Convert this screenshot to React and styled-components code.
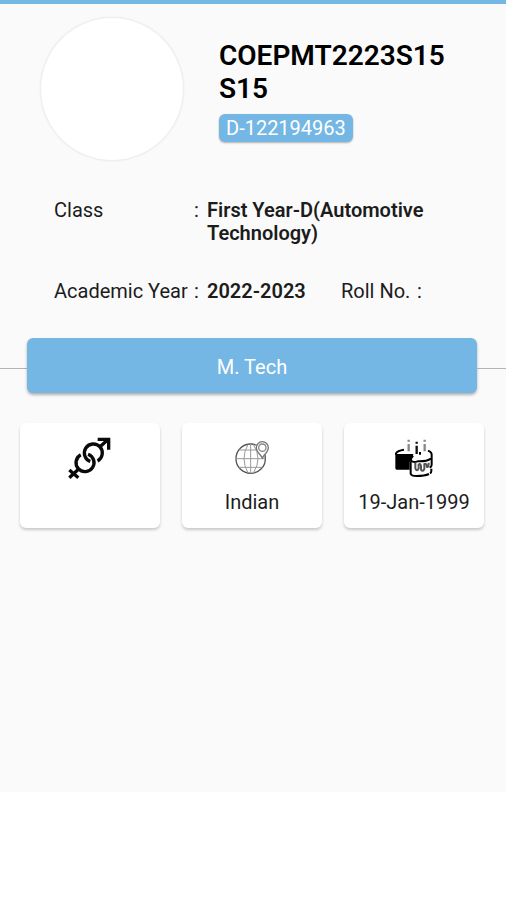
import React from "react";
import styled, { createGlobalStyle } from "styled-components";

const STUDENT = {
  name: "COEPMT2223S15 S15",
  id: "D-122194963",
  className: "First Year-D(Automotive Technology)",
  academicYear: "2022-2023",
  rollNo: "",
  course: "M. Tech",
  gender: "",
  nationality: "Indian",
  birthday: "19-Jan-1999",
};

function GenderIcon() {
  return (
    <StIcon viewBox="0 0 180 168" aria-label="Gender">
      <g fill="none" stroke="#0a0a0a" strokeWidth="10">
        <path d="M84.2 72.6A27 27 0 1 1 62.3 74.2" />
        <path d="M90.8 94.4A27 27 0 1 1 112.7 92.8" />
        <path d="M120 50L145 28" />
        <path d="M113 28H146V59" />
        <path d="M56 117L28 143M28 120L55 143" />
      </g>
    </StIcon>
  );
}

function GlobeIcon() {
  return (
    <StIcon viewBox="-8 0 180 168" aria-label="Nationality">
      <g fill="none" stroke="#555" strokeWidth="4">
        <circle cx="78" cy="86" r="44" />
        <g stroke="#999" strokeWidth="3">
          <path d="M78 42V130M34 86H122M43 60H110M43 112H113" />
          <path d="M70 43Q46 86 70 129M86 43Q114 86 86 129" />
        </g>
        <path
          d="M113 84C108 74 95 66 95 53A18 18 0 0 1 131 53C131 66 118 74 113 84Z"
          fill="#fff"
          stroke="#777"
        />
        <circle cx="113" cy="53" r="11" stroke="#888" />
      </g>
    </StIcon>
  );
}

function CakeIcon() {
  return (
    <StIcon viewBox="0 0 180 168" aria-label="Date of birth">
      <path d="M34 72H88L84 88L77 96V119H38Q34 119 34 115Z" fill="#000" />
      <g fill="none" stroke="#000" strokeWidth="6">
        <path d="M36 74V70Q40 62 60 59" />
        <path d="M80 94V131Q82 138 98 138Q122 138 135 132" />
        <path d="M142 116V123Q142 128 138 130" />
        <path d="M132 62Q144 66 143 76V104Q143 110 137 113" />
        <path d="M88 78Q78 84 82 93Q88 98 101 94Q128 95 141 86" />
        <path d="M108 66V74" />
        <path
          d="M94 98V115Q99 127 104 115V104Q109 98 111 108V119Q116 127 121 117V102Q127 98 129 111Q134 112 134 98"
          stroke="#555"
        />
      </g>
      <g strokeWidth="7">
        <path d="M74 42V64M122 42V64" stroke="#888" />
        <path d="M74 29V35M122 29V35" stroke="#888" />
        <path d="M98 47V72M98 35V41" stroke="#111" />
      </g>
    </StIcon>
  );
}

export default function App() {
  const cards = [
    { key: "gender", icon: <GenderIcon />, text: STUDENT.gender },
    { key: "nationality", icon: <GlobeIcon />, text: STUDENT.nationality },
    { key: "birthday", icon: <CakeIcon />, text: STUDENT.birthday },
  ];

  return (
    <>
      <GlobalStyle />
      <StPage>
        <StHeader>
          <StAvatar />
          <StIdentity>
            <StName>{STUDENT.name}</StName>
            <StBadge>{STUDENT.id}</StBadge>
          </StIdentity>
        </StHeader>

        <StInfo>
          <StRow>
            <StLabel>Class</StLabel>
            <StColon>:</StColon>
            <StValue>{STUDENT.className}</StValue>
          </StRow>
          <StRow>
            <StLabel>Academic Year</StLabel>
            <StColon>:</StColon>
            <StValue $short>{STUDENT.academicYear}</StValue>
            <StLabel $short>Roll No.</StLabel>
            <StColon>:</StColon>
            <StValue>{STUDENT.rollNo}</StValue>
          </StRow>
        </StInfo>

        <StCourse>
          <StCourseButton type="button">{STUDENT.course}</StCourseButton>
        </StCourse>

        <StCards>
          {cards.map((card) => (
            <StCard key={card.key}>
              {card.icon}
              <span>{card.text}</span>
            </StCard>
          ))}
        </StCards>
      </StPage>
    </>
  );
}

const GlobalStyle = createGlobalStyle`
  * {
    box-sizing: border-box;
  }

  body {
    margin: 0;
    background: #fff;
    color: #1c1c1c;
    font-family: Roboto, "Liberation Sans", sans-serif;
    font-size: 20px;
    line-height: 23px;
  }
`;

const StPage = styled.main`
  min-height: 88vh;
  background: #fafafa;
  border-top: 4px solid #74b7e5;
`;

const StHeader = styled.header`
  display: flex;
  gap: 36px;
  padding: 14px 20px 0 41px;
`;

const StAvatar = styled.div`
  flex: none;
  width: 142px;
  height: 142px;
  border-radius: 50%;
  background: #fff;
  box-shadow: 0 0 3px rgba(0, 0, 0, 0.14);
`;

const StIdentity = styled.div`
  display: flex;
  flex-direction: column;
  align-items: flex-start;
  gap: 9px;
  padding-top: 21px;
`;

const StName = styled.h1`
  margin: 0;
  color: #000;
  font-size: 28px;
  font-weight: 600;
  line-height: 33px;
`;

const StBadge = styled.span`
  padding: 3px 7px 2px;
  border-radius: 6px;
  background: #74b7e5;
  color: #fff;
  box-shadow: 0 1px 2px rgba(0, 0, 0, 0.3);
`;

const StInfo = styled.section`
  display: flex;
  flex-direction: column;
  gap: 35px;
  padding: 39px 54px 0;
`;

const StRow = styled.div`
  display: flex;
`;

const StLabel = styled.span`
  flex: none;
  width: ${({ $short }) => ($short ? "76px" : "140px")};
`;

const StColon = styled.span`
  flex: none;
  width: 13px;
`;

const StValue = styled.strong`
  width: ${({ $short }) => ($short ? "134px" : "auto")};
  font-weight: 600;
`;

const StCourse = styled.div`
  display: flex;
  align-items: center;
  padding-top: 35px;

  &::before,
  &::after {
    content: "";
    width: 27px;
    height: 1px;
    background: #b4b4b4;
  }

  &::after {
    width: 29px;
  }
`;

const StCourseButton = styled.button`
  flex: 1;
  height: 55px;
  margin-bottom: 6px;
  padding: 3px 6px 0;
  border: 0;
  border-radius: 6px;
  background: #74b7e5;
  color: #fff;
  font: inherit;
  box-shadow: 0 2px 3px rgba(0, 0, 0, 0.3);
`;

const StCards = styled.section`
  display: grid;
  grid-template-columns: repeat(3, 1fr);
  gap: 22px;
  padding: 24px 22px 24px 20px;
`;

const StCard = styled.article`
  display: flex;
  flex-direction: column;
  align-items: center;
  gap: 5px;
  height: 105px;
  padding-top: 7px;
  border-radius: 6px;
  background: #fff;
  box-shadow: 0 2px 3px rgba(0, 0, 0, 0.2);
`;

const StIcon = styled.svg`
  width: 60px;
  height: 56px;
`;
